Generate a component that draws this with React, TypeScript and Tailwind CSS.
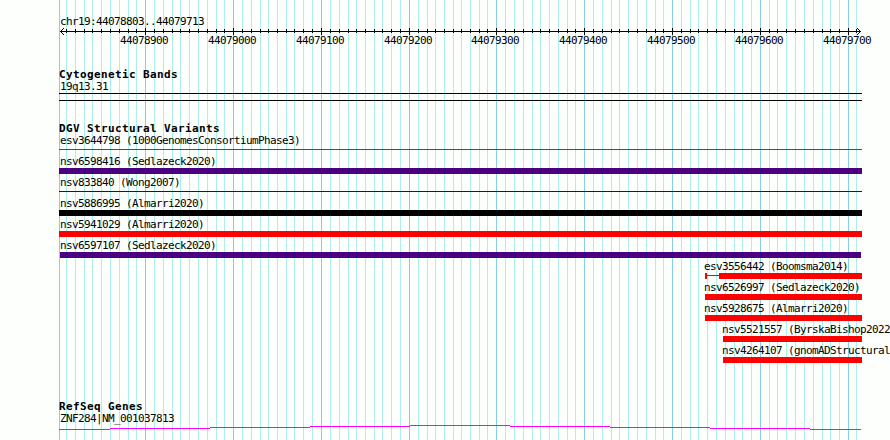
const WIDTH = 803;

const MAJOR = [59, 145, 233, 321, 409, 496, 584, 672, 760, 848];
const MINOR = [
  66, 75, 84, 92, 101, 110, 119, 128, 136, 154, 163, 172, 180, 189, 198, 207, 216, 224, 242, 251,
  260, 268, 277, 286, 294, 303, 312, 330, 339, 348, 356, 365, 374, 382, 391, 400, 418, 427, 435,
  444, 453, 461, 470, 479, 487, 505, 514, 523, 532, 540, 549, 558, 567, 575, 593, 602, 611, 619,
  628, 637, 646, 655, 663, 681, 690, 698, 707, 716, 725, 734, 742, 751, 769, 777, 786, 795, 804,
  813, 822, 830, 839, 856,
];

type Variant = {
  label: string;
  labelX: number;
  start: number;
  end: number;
  color: string;
  thin?: boolean;
  split?: boolean;
};

const VARIANTS: Variant[] = [
  { label: "esv3644798 (1000GenomesConsortiumPhase3)", labelX: 60, start: 59, end: 862, color: "bg-[#f00]", thin: true },
  { label: "nsv6598416 (Sedlazeck2020)", labelX: 60, start: 59, end: 862, color: "bg-[#4b0082]" },
  { label: "nsv833840 (Wong2007)", labelX: 60, start: 59, end: 862, color: "bg-[#00f]", thin: true },
  { label: "nsv5886995 (Almarri2020)", labelX: 60, start: 59, end: 862, color: "bg-black" },
  { label: "nsv5941029 (Almarri2020)", labelX: 60, start: 59, end: 862, color: "bg-[#f00]" },
  { label: "nsv6597107 (Sedlazeck2020)", labelX: 60, start: 60, end: 861, color: "bg-[#4b0082]" },
  { label: "esv3556442 (Boomsma2014)", labelX: 704, start: 705, end: 862, color: "bg-[#f00]", split: true },
  { label: "nsv6526997 (Sedlazeck2020)", labelX: 704, start: 705, end: 862, color: "bg-[#f00]" },
  { label: "nsv5928675 (Almarri2020)", labelX: 704, start: 705, end: 862, color: "bg-[#f00]" },
  { label: "nsv5521557 (ByrskaBishop2022", labelX: 722, start: 723, end: 862, color: "bg-[#f00]" },
  { label: "nsv4264107 (gnomADStructural", labelX: 722, start: 723, end: 862, color: "bg-[#f00]" },
];

function Grid() {
  return (
    <svg className="absolute inset-0" width={890} height={440} shapeRendering="crispEdges">
      {MINOR.map((x) => (
        <rect key={x} x={x} y={0} width={1} height={440} fill="#afeeee" />
      ))}
      {MAJOR.map((x) => (
        <rect key={x} x={x} y={0} width={1} height={440} fill="#87ceeb" />
      ))}
    </svg>
  );
}

function Ruler() {
  return (
    <svg className="-mt-px block" width={890} height={9} shapeRendering="crispEdges">
      <rect x={60} y={4} width={801} height={1} />
      {MINOR.map((x) => (
        <rect key={x} x={x} y={2} width={1} height={4} />
      ))}
      {MAJOR.slice(1).map((x) => (
        <rect key={x} x={x} y={1} width={1} height={7} />
      ))}
      <path d="M61 3h1v1h-1zM62 2h1v1h-1zM63 1h1v1h-1zM61 5h1v1h-1zM62 6h1v1h-1zM63 7h1v1h-1z" />
      <path d="M859 3h1v1h-1zM858 2h1v1h-1zM857 1h1v1h-1zM859 5h1v1h-1zM858 6h1v1h-1zM857 7h1v1h-1z" />
    </svg>
  );
}

function Label({ children }: { children: string }) {
  return (
    <div className="h-3 whitespace-pre text-[11px] leading-3 tracking-[-0.622px]">{children}</div>
  );
}

function Heading({ children }: { children: string }) {
  return (
    <h2 className="h-3 whitespace-pre pl-[59px] text-[11px] font-bold leading-3 tracking-[0.378px]">
      {children}
    </h2>
  );
}

function Bar({ variant }: { variant: Variant }) {
  const { start, end, color, thin, split } = variant;
  if (split) {
    return (
      <div className="flex h-1.5 items-start">
        <div className={`h-1.5 w-0.5 ${color}`} />
        <div className={`mt-0.5 h-px w-3 ${color}`} />
        <div className={`h-1.5 w-[143px] ${color}`} />
      </div>
    );
  }
  return (
    <div className="flex h-1.5 items-start">
      <div className={`${color} ${thin ? "mt-0.5 h-px" : "h-1.5"}`} style={{ width: end - start }} />
    </div>
  );
}

export default function App() {
  return (
    <div className="relative h-[440px] w-[890px] overflow-hidden bg-[#fdfffc] font-['DejaVu_Sans_Mono',monospace] text-black">
      <Grid />
      <main className="relative flex flex-col">
        <div className="pl-[60px] pt-4">
          <Label>chr19:44078803..44079713</Label>
        </div>
        <Ruler />
        <div className="-mt-px flex h-3 pl-[120px] text-[11px] leading-3 tracking-[-0.622px]">
          {MAJOR.slice(1).map((x, i) => (
            <span key={x} className="shrink-0" style={{ width: (MAJOR[i + 2] ?? 900) - x }}>
              {44078900 + i * 100}
            </span>
          ))}
        </div>

        <section className="mt-[22px]">
          <Heading>Cytogenetic Bands</Heading>
          <div className="pl-[60px]">
            <Label>19q13.31</Label>
          </div>
          <div className="ml-[59px] h-2 w-[803px] border-y border-black" />
        </section>

        <section className="mt-[22px]">
          <Heading>DGV Structural Variants</Heading>
          <div className="flex flex-col gap-[3px]">
            {VARIANTS.map((v) => (
              <div key={v.label}>
                <div style={{ paddingLeft: v.labelX }}>
                  <Label>{v.label}</Label>
                </div>
                <div style={{ paddingLeft: v.start }}>
                  <Bar variant={v} />
                </div>
              </div>
            ))}
          </div>
        </section>

        <section className="mt-[38px]">
          <Heading>RefSeq Genes</Heading>
          <div className="pl-[60px]">
            <Label>ZNF284|NM_001037813</Label>
          </div>
          <svg className="ml-[59px] block" width={WIDTH} height={8} shapeRendering="crispEdges" fill="#f0f">
            <rect x={0} y={4} width={51} height={1} />
            <rect x={51} y={3} width={100} height={1} />
            <rect x={151} y={2} width={100} height={1} />
            <rect x={251} y={1} width={100} height={1} />
            <rect x={351} y={0} width={100} height={1} />
            <rect x={451} y={1} width={100} height={1} />
            <rect x={551} y={2} width={100} height={1} />
            <rect x={651} y={3} width={100} height={1} />
            <rect x={751} y={4} width={51} height={1} />
          </svg>
        </section>
      </main>
    </div>
  );
}
